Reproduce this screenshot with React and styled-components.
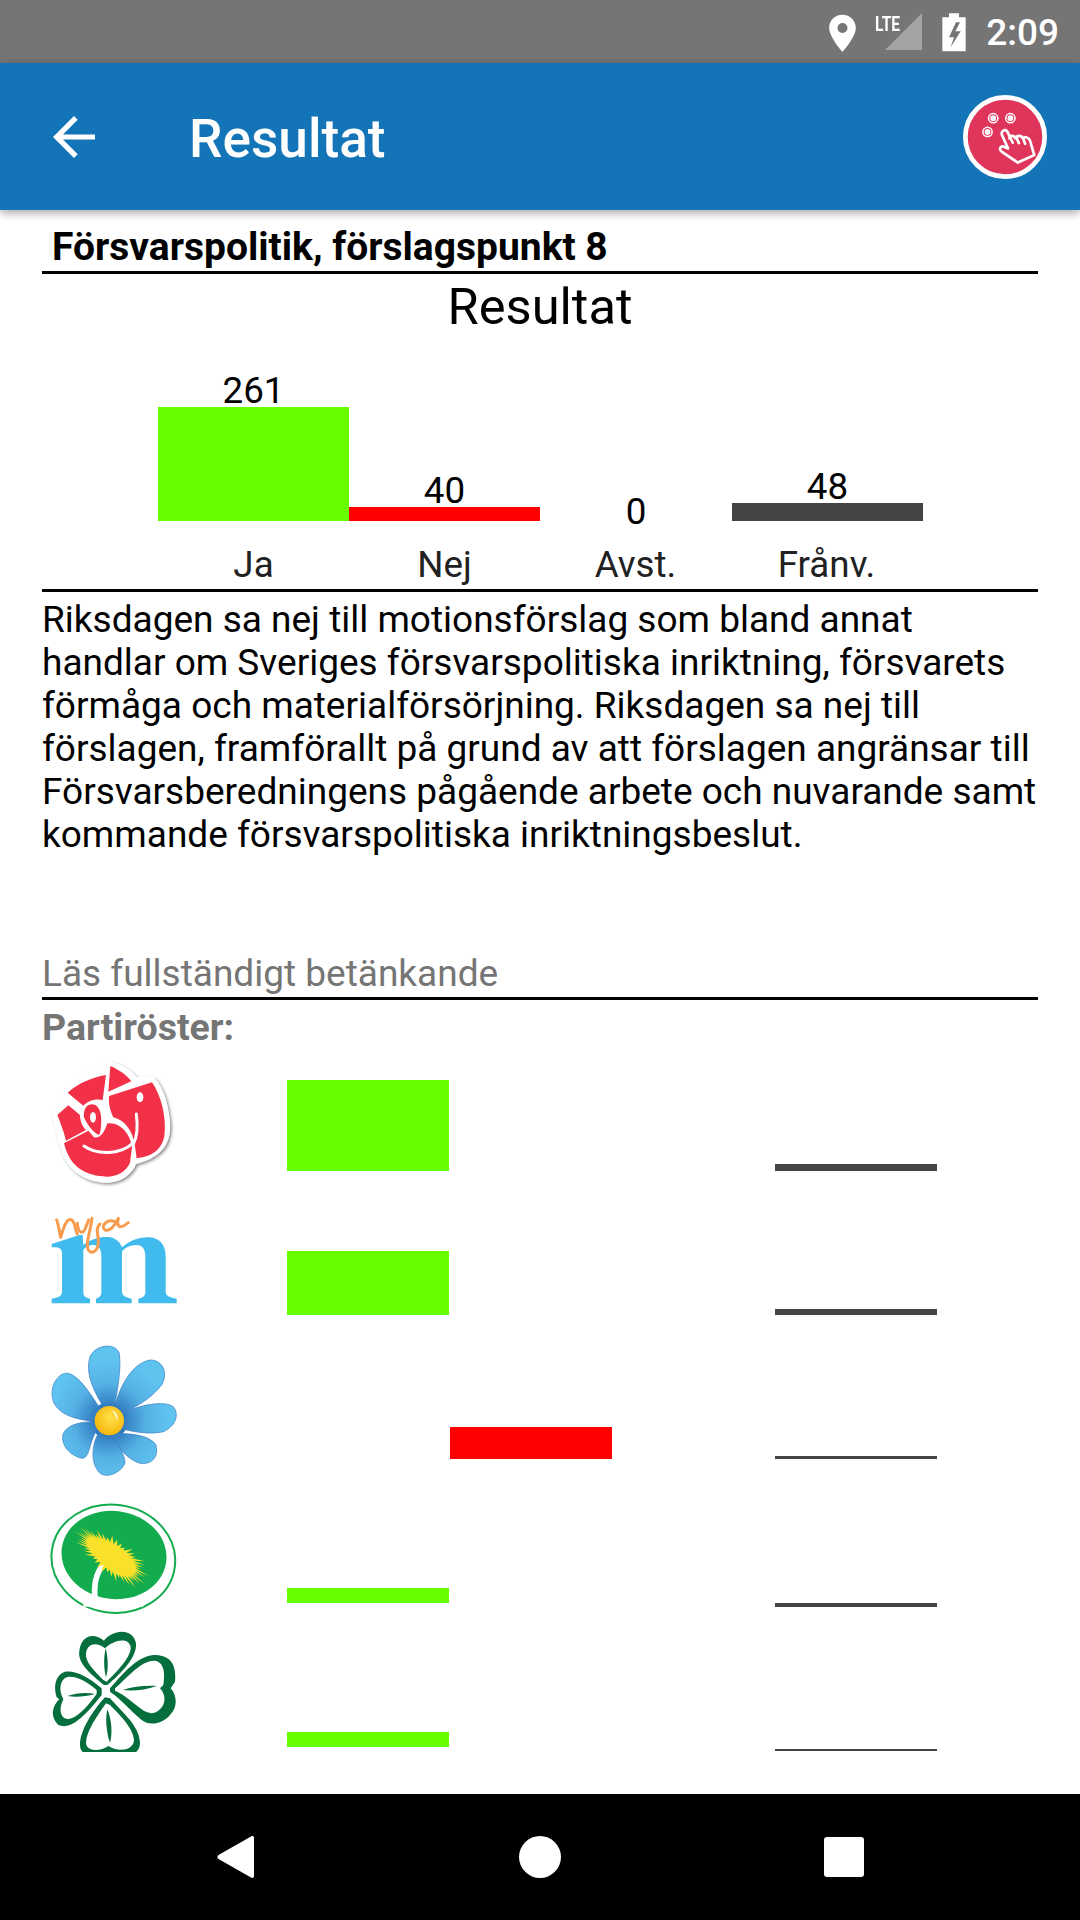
import styled, { createGlobalStyle } from 'styled-components'

const GlobalStyle = createGlobalStyle`
  html, body {
    margin: 0;
    padding: 0;
    background: #fff;
  }
  body {
    font-family: Roboto, "Noto Sans", sans-serif;
    color: #000;
  }
`

const Page = styled.div`
  width: 1080px;
  height: 1920px;
  display: flex;
  flex-direction: column;
  overflow: hidden;
  background: #fff;
`

const StatusBar = styled.div`
  height: 63px;
  flex: none;
  background: #757575;
  display: flex;
  justify-content: flex-end;
  align-items: center;
  gap: 20px;
  padding-right: 21px;
  color: #fff;
`

const StatusIcon = styled.svg`
  display: block;
  flex: none;
  width: ${(p) => p.$w}px;
  height: 40px;
`

const Signal = styled.div`
  position: relative;
  width: 46px;
  height: 40px;
`

const Lte = styled.span`
  position: absolute;
  left: -1px;
  top: 0;
  font-size: 21px;
  line-height: 24px;
  font-weight: 700;
  transform: scaleX(0.74);
  transform-origin: left center;
`

const Clock = styled.span`
  font-size: 37px;
  line-height: 43px;
  font-weight: 500;
  margin-top: 2px;
`

const AppBar = styled.header`
  height: 147px;
  flex: none;
  position: relative;
  z-index: 2;
  display: flex;
  align-items: center;
  padding: 0 33px 0 53px;
  background: #1374b8;
  color: #fff;
  box-shadow: 0 3px 9px rgba(0, 0, 0, 0.35);
`

const BackIcon = styled.svg`
  width: 42px;
  height: 42px;
  flex: none;
`

const Title = styled.h1`
  flex: 1;
  margin: 4px 0 0 94px;
  font-size: 53.2px;
  line-height: 62px;
  font-weight: 500;
`

const VoteButton = styled.svg`
  width: 84px;
  height: 84px;
  flex: none;
`

const Content = styled.main`
  flex: 1;
  min-height: 0;
  display: flex;
  flex-direction: column;
  padding: 16px 42px 0;
`

const Heading = styled.h2`
  margin: 0;
  padding-left: 10px;
  font-size: 39px;
  line-height: 43px;
  font-weight: 700;
`

const Divider = styled.div`
  height: 3px;
  flex: none;
  background: #000;
  margin-top: ${(p) => p.$top}px;
`

const ChartTitle = styled.div`
  margin-top: 5px;
  text-align: center;
  font-size: 50.6px;
  line-height: 55px;
`

const BarArea = styled.div`
  height: 187px;
  display: grid;
  grid-template-columns: 191px 191px 192px 191px;
  margin-left: 116px;
  align-items: end;
`

const BarColumn = styled.div`
  display: flex;
  flex-direction: column;
  align-items: center;
`

const BarValue = styled.span`
  font-size: 36.75px;
  line-height: 32px;
  margin-bottom: ${(p) => p.$offset}px;
`

const ChartBar = styled.div`
  width: 100%;
  background: ${(p) => p.$color};
  height: ${(p) => p.$height}px;
`

const LabelRow = styled.div`
  display: grid;
  grid-template-columns: repeat(4, 191px);
  margin: 22px 0 0 116px;
`

const Label = styled.span`
  text-align: center;
  font-size: 36.75px;
  line-height: 43px;
  color: #212121;
`

const Body = styled.p`
  margin: 6px 0 0;
  font-size: 37px;
  line-height: 43px;
`

const FullLink = styled.div`
  margin-top: 96px;
  font-size: 37px;
  line-height: 43px;
  color: #757575;
`

const SubHeading = styled.div`
  margin-top: 6px;
  font-size: 37.5px;
  line-height: 43px;
  font-weight: 700;
  color: #757575;
`

const PartyList = styled.div`
  margin-top: 1px;
  height: 702px;
  flex: none;
  overflow: hidden;
`

const PartyRow = styled.div`
  height: 144px;
  display: grid;
  grid-template-columns: 245px 163px 163px 162px 162px;
  align-items: end;
`

const Logo = styled.svg`
  display: block;
  width: 128px;
  height: 144px;
  margin-left: 8px;
`

const PartyBar = styled.div`
  width: 162px;
  grid-column: ${(p) => p.$slot};
  grid-row: 1;
  height: ${(p) => p.$height}px;
  margin-bottom: ${(p) => 23 - p.$drop}px;
  background: ${(p) => p.$color};
`

const NavBar = styled.nav`
  height: 126px;
  flex: none;
  background: #000;
  display: grid;
  grid-template-columns: repeat(3, 304px);
  justify-content: center;
  align-items: center;
  justify-items: center;
`

const NavIcon = styled.svg`
  display: block;
  width: 44px;
  height: 44px;
  fill: #fff;
`

const GREEN = '#66ff00'
const RED = '#ff0000'
const GREY = '#444444'

const chart = [
  { label: 'Ja', value: 261, height: 114, color: GREEN, offset: 0 },
  { label: 'Nej', value: 40, height: 14, color: RED, offset: 0 },
  { label: 'Avst.', value: 0, height: 0, color: GREY, offset: -7 },
  { label: 'Frånv.', value: 48, height: 18, color: GREY, offset: 0 },
]

// spiky outline for the dandelion head, tapered towards the upper left
const dandelion = (() => {
  const points = []
  const count = 90
  const tilt = (36 * Math.PI) / 180
  for (let i = 0; i < count; i++) {
    const a = (i / count) * Math.PI * 2
    const spike = i % 2 ? 0.76 : 0.95 + ((i * 13) % 7) * 0.045
    const x = Math.cos(a) * 112 * spike
    const y = Math.sin(a) * (46 + Math.cos(a) * 8) * spike
    points.push(
      `${(333 + x * Math.cos(tilt) - y * Math.sin(tilt)).toFixed(1)},${(678 + x * Math.sin(tilt) + y * Math.cos(tilt)).toFixed(1)}`
    )
  }
  return points.join(' ')
})()

function RoseLogo() {
  return (
    <Logo viewBox="150 30 384 432">
      <defs>
        <filter id="roseShadow" x="-10%" y="-10%" width="125%" height="125%">
          <feDropShadow dx="5" dy="5" stdDeviation="4" floodColor="#000" floodOpacity="0.45" />
        </filter>
      </defs>
      <path
        d="M330 65 C360 70 395 90 410 112 L460 110 C490 140 505 190 510 250 C512 310 490 350 408 372 C395 405 360 428 320 428 C260 425 205 400 180 320 L158 232 L185 165 C220 115 280 85 330 65 Z"
        fill="#fff"
        filter="url(#roseShadow)"
      />
      <g fill="#f23149">
        <path d="M331 78 C355 88 380 105 394 124 L325 155 Z" />
        <path d="M203 158 C235 130 275 112 318 105 L308 180 C290 175 265 180 250 197 Z" />
        <path d="M327 168 L456 127 C485 170 498 230 494 280 C490 325 460 350 410 355 L404 312 C398 275 375 240 340 232 C332 215 325 195 327 168 Z" />
        <path d="M172 225 L205 196 L240 225 C240 245 248 260 258 270 L198 302 C195 285 180 245 172 225 Z" />
        <path d="M192 310 L265 272 L282 292 C300 296 312 280 322 250 C360 245 390 280 396 320 L390 368 C378 395 350 410 320 410 C260 408 210 385 192 310 Z" />
        <path d="M264 196 C280 188 296 195 302 222 C306 245 303 270 298 285 C280 280 262 255 252 232 C250 218 254 204 264 196 Z" />
      </g>
      <ellipse cx="279" cy="232" rx="9" ry="16" fill="#fff" />
      <ellipse cx="420" cy="172" rx="10" ry="15" fill="#fff" />
      <g fill="none" stroke="#fff" strokeWidth="9" strokeLinecap="round">
        <path d="M252 318 C290 345 360 345 398 310" />
        <path d="M409 222 C414 260 412 290 400 312" />
      </g>
    </Logo>
  )
}

function NyaLogo() {
  return (
    <Logo viewBox="150 462 384 432">
      <path
        d="M155 612 L238 585 L248 585 L250 615 C275 595 310 588 330 592 C350 595 362 610 366 622 C390 600 420 590 450 592 C485 596 497 620 497 650 L497 755 C497 768 510 772 530 776 L530 790 L415 790 L415 776 C430 772 436 768 436 755 L436 650 C436 625 425 615 410 615 C390 615 372 625 366 635 L366 755 C366 768 380 772 395 776 L395 790 L288 790 L288 776 C298 772 304 768 304 755 L304 650 C304 625 295 615 280 615 C265 615 255 622 250 630 L250 755 C250 768 255 772 270 776 L270 790 L155 790 L155 776 C175 772 186 768 186 755 L186 640 C186 625 175 620 155 622 Z"
        fill="#41bbed"
      />
      <g fill="none" stroke="#f89b4e" strokeWidth="9" strokeLinecap="round" strokeLinejoin="round">
        <path d="M170 540 C176 555 178 575 182 592 C190 565 200 532 215 540 C226 546 224 566 232 582" />
        <path d="M232 550 C235 582 250 585 258 560 L266 540" />
        <path d="M276 535 C270 580 256 610 264 628 C272 645 295 636 295 605 C295 580 285 565 300 552" />
        <path d="M345 545 C320 535 300 560 315 570 C330 575 345 555 355 535 C350 555 355 572 385 548" />
      </g>
    </Logo>
  )
}

const petals = [
  'M310 230 C280 180 255 130 270 80 C285 45 345 35 358 70 C365 120 350 190 345 225 Z',
  'M345 225 C360 170 395 100 450 90 C490 90 505 130 485 165 C450 210 400 235 365 250 Z',
  'M365 250 C420 225 490 210 520 230 C540 255 525 290 490 305 C450 315 400 305 370 298 Z',
  'M345 310 C390 310 450 315 468 345 C478 385 450 405 420 400 C385 390 350 350 335 320 Z',
  'M295 310 C275 345 270 400 300 430 C330 450 375 415 375 395 C370 360 345 330 330 315 Z',
  'M285 275 C250 275 205 280 190 310 C180 340 205 375 245 385 C270 385 265 345 290 300 Z',
  'M290 275 C240 270 180 260 160 215 C145 170 175 125 205 130 C240 140 270 190 300 235 Z',
]

function FlowerLogo() {
  return (
    <Logo viewBox="150 24 384 432">
      <defs>
        <radialGradient id="petal" gradientUnits="userSpaceOnUse" cx="328" cy="272" r="200">
          <stop offset="0.2" stopColor="#2f78bd" />
          <stop offset="0.55" stopColor="#55b0e4" />
          <stop offset="0.9" stopColor="#5fc3f0" />
        </radialGradient>
        <radialGradient id="seed" cx="0.55" cy="0.4" r="0.6">
          <stop offset="0" stopColor="#ffe14a" />
          <stop offset="1" stopColor="#f6b60c" />
        </radialGradient>
      </defs>
      <circle cx="328" cy="272" r="56" fill="#2f78bd" />
      {petals.map((d) => (
        <path key={d} d={d} fill="url(#petal)" stroke="#3a7cc4" strokeWidth="2" />
      ))}
      <circle cx="328" cy="272" r="44" fill="url(#seed)" />
      <path d="M335 240 C348 245 355 258 352 272 C348 258 343 248 335 240 Z" fill="#fff" />
    </Logo>
  )
}

function DandelionLogo() {
  return (
    <Logo viewBox="150 456 384 432">
      <ellipse
        cx="340"
        cy="686"
        rx="186"
        ry="162"
        fill="none"
        stroke="#12ab4d"
        strokeWidth="6"
        transform="rotate(8 340 686)"
      />
      <ellipse cx="342" cy="675" rx="158" ry="132" fill="#12ab4d" transform="rotate(8 342 675)" />
      <path d="M312 702 C288 728 280 770 286 815" fill="none" stroke="#fff" strokeWidth="17" />
      <path d="M250 800 C300 818 360 815 430 795 L430 830 L250 830 Z" fill="#fff" />
      <polygon points={dandelion} fill="#f9e02b" />
    </Logo>
  )
}

const cloverLeaves = [
  {
    outer: 'M312 195 C270 160 232 130 238 92 C245 42 285 38 312 62 C335 30 398 20 408 70 C412 110 365 160 322 195 Z',
    inner: 'M310 180 C280 150 255 125 258 100 C262 70 290 65 315 85 C340 60 385 50 392 80 C395 110 350 155 320 185 Z',
    rib: 'M317 85 C310 115 312 150 318 172 C325 150 325 115 317 85 Z',
  },
  {
    outer: 'M330 205 C370 160 410 110 460 105 C510 105 530 130 525 185 L512 205 C530 225 535 260 510 285 C490 310 450 320 425 300 C390 270 360 235 330 215 Z',
    inner: 'M345 205 C385 170 420 125 460 122 C485 122 498 145 490 195 L480 205 C498 225 498 250 480 268 C462 285 445 282 425 268 C395 245 370 222 345 212 Z',
    rib: 'M368 210 C400 200 435 196 470 198 C435 210 400 214 368 210 Z',
  },
  {
    outer: 'M305 205 C265 170 225 150 195 155 C165 165 160 200 170 232 L178 238 C155 260 150 290 175 315 C210 330 250 295 305 225 Z',
    inner: 'M290 210 C260 185 225 165 200 172 C180 180 175 210 190 238 C170 280 190 305 215 295 C240 285 270 250 290 222 Z',
    rib: 'M202 228 C230 218 260 216 285 222 C255 230 230 232 202 228 Z',
  },
  {
    outer: 'M315 232 C280 270 240 330 240 375 C240 410 290 420 325 400 C360 420 420 410 420 370 C420 320 370 280 330 235 Z',
    inner: 'M318 250 C290 290 258 335 258 370 C260 395 300 395 325 378 C350 395 400 395 402 360 C400 325 360 285 330 255 Z',
    rib: 'M322 268 C315 300 320 340 330 368 C338 340 335 300 322 268 Z',
  },
]

function CloverLogo() {
  return (
    <Logo viewBox="150 18 384 432">
      {cloverLeaves.map((leaf) => (
        <g key={leaf.rib}>
          <path d={leaf.outer} fill="#046e3d" />
          <path d={leaf.inner} fill="#fff" />
          <path d={leaf.rib} fill="#046e3d" />
        </g>
      ))}
    </Logo>
  )
}

const parties = [
  {
    id: 's',
    logo: <RoseLogo />,
    bars: [
      { slot: 2, height: 91, color: GREEN, drop: 0 },
      { slot: 5, height: 7, color: GREY, drop: 0 },
    ],
  },
  {
    id: 'm',
    logo: <NyaLogo />,
    bars: [
      { slot: 2, height: 64, color: GREEN, drop: 0 },
      { slot: 5, height: 6, color: GREY, drop: 0 },
    ],
  },
  {
    id: 'sd',
    logo: <FlowerLogo />,
    bars: [
      { slot: 3, height: 32, color: RED, drop: 0 },
      { slot: 5, height: 3, color: GREY, drop: 0 },
    ],
  },
  {
    id: 'mp',
    logo: <DandelionLogo />,
    bars: [
      { slot: 2, height: 15, color: GREEN, drop: 0 },
      { slot: 5, height: 4, color: GREY, drop: 4 },
    ],
  },
  {
    id: 'c',
    logo: <CloverLogo />,
    bars: [
      { slot: 2, height: 15, color: GREEN, drop: 0 },
      { slot: 5, height: 2, color: GREY, drop: 4 },
    ],
  },
]

export default function App() {
  return (
    <Page>
      <GlobalStyle />

      <StatusBar>
        <StatusIcon $w={27} viewBox="148 30 80 120">
          <path
            fillRule="evenodd"
            fill="#fff"
            d="M188 38 C165 38 148 55 148 78 C148 105 188 150 188 150 C188 150 228 105 228 78 C228 55 210 38 188 38 Z M188 63 A15 15 0 1 1 188 93 A15 15 0 1 1 188 63 Z"
          />
        </StatusIcon>
        <Signal>
          <Lte>LTE</Lte>
          <StatusIcon $w={46} viewBox="0 0 46 40">
            <path d="M9 38 L46 1 L46 38 Z" fill="#a3a3a3" />
          </StatusIcon>
        </Signal>
        <StatusIcon $w={24} viewBox="489 32 72 120">
          <path
            fillRule="evenodd"
            fill="#fff"
            d="M510 36 L540 36 L540 48 L560 48 L560 150 L490 150 L490 48 L510 48 Z M531 63 L510 108 L525 108 L515 138 L545 90 L529 90 L543 63 Z"
          />
        </StatusIcon>
        <Clock>2:09</Clock>
      </StatusBar>

      <AppBar>
        <BackIcon viewBox="0 0 42 42">
          <path
            d="M42 18.4 H10 L24.7 3.7 L21 0 L0 21 L21 42 L24.7 38.3 L10 23.6 H42 Z"
            fill="#fff"
          />
        </BackIcon>
        <Title>Resultat</Title>
        <VoteButton viewBox="552 283 250 250">
          <circle cx="677" cy="408" r="118" fill="#e0355b" stroke="#fff" strokeWidth="14" />
          <g fill="#fff">
            <circle cx="642" cy="352" r="16" />
            <circle cx="693" cy="352" r="16" />
            <circle cx="625" cy="393" r="16" />
          </g>
          <g fill="none" stroke="#e0355b" strokeWidth="3">
            <circle cx="642" cy="352" r="10" />
            <circle cx="693" cy="352" r="10" />
            <circle cx="625" cy="393" r="10" />
          </g>
          <path
            d="M700 425 L684 392 C678 382 664 390 668 402 L686 442 L672 436 C662 434 658 446 668 452 L715 484 L764 462 L752 420 C748 408 736 406 730 412 C726 402 712 402 708 412 C704 402 692 402 690 412 M712 412 L718 426 M731 412 L737 428"
            fill="none"
            stroke="#fff"
            strokeWidth="8"
            strokeLinejoin="round"
            strokeLinecap="round"
          />
        </VoteButton>
      </AppBar>

      <Content>
        <Heading>Försvarspolitik, förslagspunkt 8</Heading>
        <Divider $top={2} />
        <ChartTitle>Resultat</ChartTitle>
        <BarArea>
          {chart.map((c) => (
            <BarColumn key={c.label}>
              <BarValue $offset={c.offset}>{c.value}</BarValue>
              <ChartBar $color={c.color} $height={c.height} />
            </BarColumn>
          ))}
        </BarArea>
        <LabelRow>
          {chart.map((c) => (
            <Label key={c.label}>{c.label}</Label>
          ))}
        </LabelRow>
        <Divider $top={3} />
        <Body>
          Riksdagen sa nej till motionsförslag som bland annat
          <br />
          handlar om Sveriges försvarspolitiska inriktning, försvarets
          <br />
          förmåga och materialförsörjning. Riksdagen sa nej till
          <br />
          förslagen, framförallt på grund av att förslagen angränsar till
          <br />
          Försvarsberedningens pågående arbete och nuvarande samt
          <br />
          kommande försvarspolitiska inriktningsbeslut.
        </Body>
        <FullLink>Läs fullständigt betänkande</FullLink>
        <Divider $top={2} />
        <SubHeading>Partiröster:</SubHeading>
        <PartyList>
          {parties.map((p) => (
            <PartyRow key={p.id}>
              {p.logo}
              {p.bars.map((b) => (
                <PartyBar
                  key={b.slot}
                  $slot={b.slot}
                  $height={b.height}
                  $color={b.color}
                  $drop={b.drop}
                />
              ))}
            </PartyRow>
          ))}
        </PartyList>
      </Content>

      <NavBar>
        <NavIcon viewBox="0 0 44 44">
          <path d="M40 3 C40 1 38.5 0.5 37 1.5 L4.5 20 C3 21 3 23 4.5 24 L37 42.5 C38.5 43.5 40 43 40 41 Z" />
        </NavIcon>
        <NavIcon viewBox="0 0 44 44">
          <circle cx="22" cy="22" r="21" />
        </NavIcon>
        <NavIcon viewBox="0 0 44 44">
          <rect x="2" y="2" width="40" height="40" rx="3" />
        </NavIcon>
      </NavBar>
    </Page>
  )
}
